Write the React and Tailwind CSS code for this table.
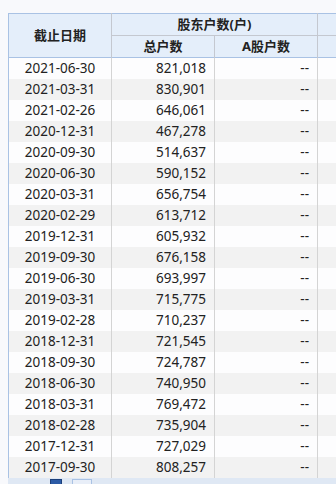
const rows = [
  ['2021-06-30', '821,018'],
  ['2021-03-31', '830,901'],
  ['2021-02-26', '646,061'],
  ['2020-12-31', '467,278'],
  ['2020-09-30', '514,637'],
  ['2020-06-30', '590,152'],
  ['2020-03-31', '656,754'],
  ['2020-02-29', '613,712'],
  ['2019-12-31', '605,932'],
  ['2019-09-30', '676,158'],
  ['2019-06-30', '693,997'],
  ['2019-03-31', '715,775'],
  ['2019-02-28', '710,237'],
  ['2018-12-31', '721,545'],
  ['2018-09-30', '724,787'],
  ['2018-06-30', '740,950'],
  ['2018-03-31', '769,472'],
  ['2018-02-28', '735,904'],
  ['2017-12-31', '727,029'],
  ['2017-09-30', '808,257'],
]

const App = () => {
  return (
    <div
      className="h-[484px] overflow-hidden bg-[#f8f9fc] pt-[13px] pl-[8px] text-[13.5px] text-[#222]"
      style={{ fontFamily: '"Noto Sans", "Noto Sans CJK SC", sans-serif' }}
    >
      <table className="border-collapse table-fixed w-[400px]">
        <colgroup>
          <col className="w-[103px]" />
          <col className="w-[103px]" />
          <col className="w-[103px]" />
          <col className="w-[91px]" />
        </colgroup>
        <thead className="bg-[#e4eefa] font-bold text-[13px]">
          <tr className="h-[22px] border-t border-[#a9c2e4]">
            <th rowSpan={2} className="border-l border-l-[#a9c2e4] border-r border-r-[#c4c8d0] font-bold">
              截止日期
            </th>
            <th colSpan={2} className="border-r border-r-[#c4c8d0] border-b border-b-[#c4c8d0] font-bold">
              股东户数(户)
            </th>
            <th className="border-b border-b-[#c4c8d0]"></th>
          </tr>
          <tr className="h-[22px] border-b border-[#a9c2e4]">
            <th className="border-r border-r-[#c4c8d0] font-bold">总户数</th>
            <th className="border-r border-r-[#c4c8d0] font-bold">A股户数</th>
            <th></th>
          </tr>
        </thead>
        <tbody>
          {rows.map(([date, total], i) => (
            <tr key={date} className={`h-[21px] ${i % 2 ? 'bg-[#f2f2f2]' : 'bg-[#fdfdfe]'}`}>
              <td className="border-l border-l-[#a9c2e4] border-r border-r-[#d4d4d4] text-center p-0 leading-[20px]">
                {date}
              </td>
              <td className="border-r border-r-[#d4d4d4] text-right pr-[8px] p-0 leading-[20px]">{total}</td>
              <td className="border-r border-r-[#d4d4d4] text-right pr-[8px] p-0 leading-[20px]">--</td>
              <td className="p-0"></td>
            </tr>
          ))}
        </tbody>
      </table>
      <div className="flex h-[10px] items-start gap-[10px] bg-[#dfe8f4] pl-[42px] pt-[1px]">
        <div className="h-[12px] w-[12px] border border-[#1c3f7a] bg-[#2c5ba6]" />
        <div className="h-[12px] w-[20px] border border-[#a9c2e4] bg-[#e8eef8]" />
      </div>
    </div>
  )
}

export default App
